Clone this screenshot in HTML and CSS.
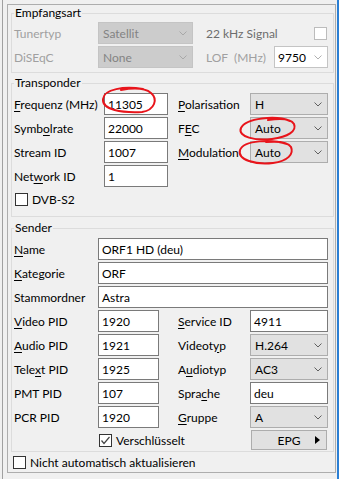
FILE: index.html
```html
<!DOCTYPE html>
<html lang="de">
  <head>
    <meta charset="UTF-8" />
    <title>Kanal bearbeiten</title>
    <link rel="stylesheet" href="styles.css">
  </head>
  <body>
    <div class="window">
      <div class="rail"></div>
      <div class="tab">
        <fieldset class="group group-empfang">
          <legend>Empfangsart</legend>
          <span class="lbl disabled">Tunertyp</span>
          <div class="combo combo-disabled"><span>Satellit</span><svg class="chev" width="8" height="5"><polyline points="0.5,0.5 4,4 7.5,0.5" /></svg></div>
          <div class="side">
            <span class="lbl dim">22 kHz Signal</span>
            <span class="check check-disabled"></span>
          </div>
          <span class="lbl disabled">DiSEqC</span>
          <div class="combo combo-disabled"><span>None</span><svg class="chev" width="8" height="5"><polyline points="0.5,0.5 4,4 7.5,0.5" /></svg></div>
          <div class="side">
            <span class="lbl disabled">LOF&nbsp; (MHz)</span>
            <div class="combo combo-light"><span>9750</span><svg class="chev" width="8" height="5"><polyline points="0.5,0.5 4,4 7.5,0.5" /></svg></div>
          </div>
        </fieldset>

        <fieldset class="group group-transponder">
          <legend>Transponder</legend>
          <span class="lbl"><u>F</u>requenz (MHz)</span>
          <div class="input">11305</div>
          <span class="lbl col4"><u>P</u>olarisation</span>
          <div class="combo"><span>H</span><svg class="chev" width="8" height="5"><polyline points="0.5,0.5 4,4 7.5,0.5" /></svg></div>

          <span class="lbl">Symb<u>o</u>lrate</span>
          <div class="input">22000</div>
          <span class="lbl col4">F<u>E</u>C</span>
          <div class="combo"><span>Auto</span><svg class="chev" width="8" height="5"><polyline points="0.5,0.5 4,4 7.5,0.5" /></svg></div>

          <span class="lbl">Stream ID</span>
          <div class="input">1007</div>
          <span class="lbl col4"><u>M</u>odulation</span>
          <div class="combo"><span>Auto</span><svg class="chev" width="8" height="5"><polyline points="0.5,0.5 4,4 7.5,0.5" /></svg></div>

          <span class="lbl">Net<u>w</u>ork ID</span>
          <div class="input">1</div>

          <label class="checkline span-all"><span class="check"></span>DVB-S2</label>
        </fieldset>

        <fieldset class="group group-sender">
          <legend>Sender</legend>
          <span class="lbl"><u>N</u>ame</span>
          <div class="input wide">ORF1 HD (deu)</div>
          <span class="lbl"><u>K</u>ategorie</span>
          <div class="input wide">ORF</div>
          <span class="lbl">Stammordner</span>
          <div class="input wide">Astra</div>

          <span class="lbl"><u>V</u>ideo PID</span>
          <div class="input">1920</div>
          <span class="lbl col4"><u>S</u>ervice ID</span>
          <div class="input">4911</div>

          <span class="lbl"><u>A</u>udio PID</span>
          <div class="input">1921</div>
          <span class="lbl col4">Videot<u>y</u>p</span>
          <div class="combo"><span>H.264</span><svg class="chev" width="8" height="5"><polyline points="0.5,0.5 4,4 7.5,0.5" /></svg></div>

          <span class="lbl">Tele<u>x</u>t PID</span>
          <div class="input">1925</div>
          <span class="lbl col4">A<u>u</u>diotyp</span>
          <div class="combo"><span>AC3</span><svg class="chev" width="8" height="5"><polyline points="0.5,0.5 4,4 7.5,0.5" /></svg></div>

          <span class="lbl">PMT PID</span>
          <div class="input">107</div>
          <span class="lbl col4">Spra<u>c</u>he</span>
          <div class="input">deu</div>

          <span class="lbl">PCR PID</span>
          <div class="input">1920</div>
          <span class="lbl col4"><u>G</u>ruppe</span>
          <div class="combo"><span>A</span><svg class="chev" width="8" height="5"><polyline points="0.5,0.5 4,4 7.5,0.5" /></svg></div>

          <label class="checkline crypt">
            <span class="check checked"><svg width="11" height="11"><polyline points="1.5,5.5 4,8.5 9.5,2" /></svg></span>Verschlüsselt
          </label>
          <button class="btn">EPG<span class="arrow"></span></button>
        </fieldset>

        <label class="checkline bottom"><span class="check"></span>Nicht automatisch aktualisieren</label>
      </div>
      <div class="edge"></div>

      <svg class="marks" width="339" height="479">
        <path d="M143 89 C124 86 104 89 103 99 C102 110 122 113 142 112 C155 110 158 99 151 93 C145 88 132 88 121 90" />
        <path d="M290 121 C276 115 246 118 241 128 C237 137 256 141 272 139 C288 137 297 131 294 124 C291 119 281 118 268 120" />
        <path d="M287 144 C272 139 244 140 240 150 C237 160 256 165 273 163 C288 161 294 154 291 147 C288 142 278 141 266 142" />
      </svg>
    </div>
  </body>
</html>
```

FILE: styles.css
```css
body {
  margin: 0;
  background: #f0f0f0;
  font-family: Lato, 'Segoe UI', sans-serif;
  font-size: 12px;
  color: #000;
}

.window {
  position: relative;
  display: flex;
  width: 339px;
  height: 479px;
}

.rail {
  width: 2px;
  border-right: 1px solid #a0a0a0;
  margin-right: 4px;
}

.tab {
  width: 327px;
  height: 467px;
  margin-top: 4px;
  border: 1px solid #adadad;
}

.edge {
  width: 2px;
  margin-left: 1px;
  background: #2b7fd4;
}

/* group boxes */
.group {
  display: grid;
  margin: 0 1px 0 3px;
  padding: 0 5px 0 2px;
  border: 1px solid #dcdcdc;
  min-width: 0;
  row-gap: 2px;
  align-items: center;
}

.group legend {
  padding: 0 1px;
  line-height: 16px;
}

.group-empfang {
  grid-template-columns: 84px 95px 13px 122px;
  grid-template-rows: 22px 22px;
  padding-top: 1px;
  padding-bottom: 4px;
}

.group-empfang .side {
  grid-column: 4;
}

.group-transponder {
  grid-template-columns: 90px 64px 10px 72px 78px;
  grid-template-rows: repeat(4, 22px) 21px;
  margin-top: 2px;
  padding-top: 2px;
  padding-bottom: 6px;
}

.group-sender {
  grid-template-columns: 84px 61px 19px 72px 78px;
  grid-template-rows: repeat(8, 22px) 20px;
  margin-top: 3px;
  padding-top: 2px;
  padding-bottom: 1px;
}

.col4 {
  grid-column: 4;
}

.span-all {
  grid-column: 1 / -1;
}

.lbl {
  white-space: nowrap;
}

.lbl u {
  text-underline-offset: 2px;
}

.disabled {
  color: #a0a0a0;
}

.dim {
  color: #6d6d6d;
}

.side {
  display: flex;
  align-items: center;
  justify-content: space-between;
  height: 22px;
}

/* fields */
.input,
.combo {
  box-sizing: border-box;
  height: 22px;
  display: flex;
  align-items: center;
  white-space: nowrap;
  overflow: hidden;
}

.input {
  background: #fff;
  border: 1px solid #7a7a7a;
  padding-left: 3px;
}

.input.wide {
  grid-column: 2 / -1;
}

.combo {
  justify-content: space-between;
  background: #e1e1e1;
  border: 1px solid #adadad;
  padding: 0 5px 0 4px;
}

.chev polyline {
  fill: none;
  stroke: #606060;
  stroke-width: 1;
}

.combo-disabled {
  background: #cccccc;
  border-color: #c4c4c4;
  color: #838383;
}

.combo-disabled .chev polyline {
  stroke: #a8a8a8;
}

.combo-light {
  width: 54px;
  background: #fff;
  border-color: #c4c4c4;
  padding-left: 3px;
}

.combo-light .chev polyline {
  stroke: #b0b0b0;
}

/* checkboxes */
.check {
  box-sizing: border-box;
  display: inline-flex;
  width: 13px;
  height: 13px;
  border: 1px solid #333;
  background: #fff;
  margin-right: 4px;
}

.check-disabled {
  border-color: #bcbcbc;
  margin-right: 1px;
}

.check.checked svg polyline {
  fill: none;
  stroke: #444;
  stroke-width: 1.2;
}

.checkline {
  display: flex;
  align-items: center;
  padding-left: 1px;
}

.crypt {
  grid-column: 2 / 5;
}

.btn {
  box-sizing: border-box;
  position: relative;
  height: 20px;
  margin: 0 1px;
  background: #e1e1e1;
  border: 1px solid #adadad;
  font: inherit;
  color: #000;
  padding: 0;
}

.btn .arrow {
  position: absolute;
  right: 6px;
  top: 5px;
  border-left: 5px solid #000;
  border-top: 4px solid transparent;
  border-bottom: 4px solid transparent;
}

.bottom {
  margin: 0 0 0 4px;
  height: 20px;
}

/* red hand drawn marks */
.marks {
  position: absolute;
  top: 0;
  left: 0;
  pointer-events: none;
}

.marks path {
  fill: none;
  stroke: #e8141b;
  stroke-width: 2;
  stroke-linecap: round;
}
```
